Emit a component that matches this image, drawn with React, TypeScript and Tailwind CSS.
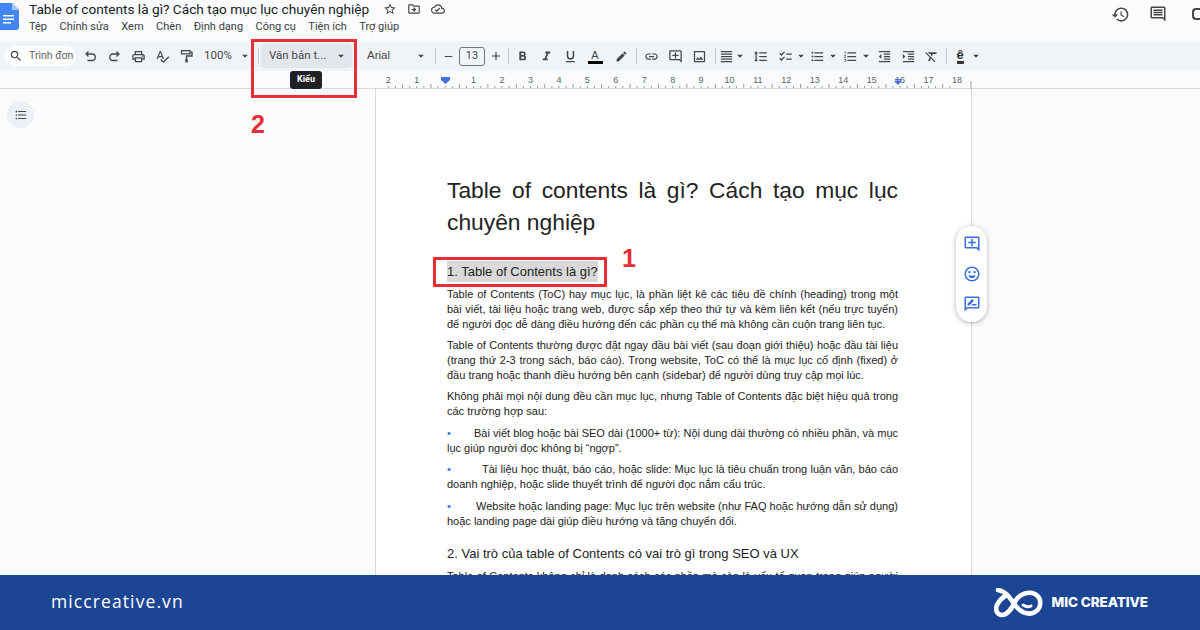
import React from "react";
import {
  MdOutlinePrint, MdSpellcheck, MdFormatBold, MdFormatItalic, MdFormatUnderlined,
  MdEdit, MdLink, MdOutlineAddComment, MdOutlineImage, MdFormatAlignJustify, MdFormatLineSpacing, MdChecklist,
  MdFormatListBulleted, MdFormatListNumbered, MdFormatIndentDecrease, MdFormatIndentIncrease, MdFormatClear, MdHistory,
  MdOutlineComment, MdStarBorder, MdOutlineDriveFileMove, MdOutlineCloudDone, MdOutlineInsertEmoticon, MdOutlineRateReview,
  MdSearch, MdRemove, MdAdd, MdArrowDropDown,
} from "react-icons/md";

type IC = React.ComponentType<{ size?: number; className?: string }>;

const Btn = ({ icon: I, cls = "w-[24px]", size = 15 }: { icon: IC; cls?: string; size?: number }) => (
  <div className={`${cls} h-[24px] shrink-0 flex items-center justify-center text-[#444746]`}>
    <I size={size} />
  </div>
);
const Caret = ({ cls = "w-[8px]" }: { cls?: string }) => (
  <div className={`${cls} h-[24px] shrink-0 flex items-center justify-center text-[#444746] overflow-visible`}>
    <MdArrowDropDown size={14} className="shrink-0" />
  </div>
);

const Undo = ({ size = 15 }: { size?: number }) => (
  <svg width={size} height={size} viewBox="0 0 15 15" fill="none" stroke="currentColor" strokeWidth="1.300">
    <path d="M5.500 2.500L3 5L5.500 7.500M3.300 5H9A2.900 2.900 0 0 1 9 11.500H4.500" />
  </svg>
);
const Redo = ({ size = 15 }: { size?: number }) => (
  <svg width={size} height={size} viewBox="0 0 15 15" fill="none" stroke="currentColor" strokeWidth="1.300">
    <path d="M9.500 2.500L12 5L9.500 7.500M11.700 5H6A2.900 2.900 0 0 0 6 11.500H10.500" />
  </svg>
);
const Roller = ({ size = 15 }: { size?: number }) => (
  <svg width={size} height={size} viewBox="0 0 15 15" fill="none" stroke="currentColor" strokeWidth="1.300">
    <path d="M2.500 1.700H11V4.800H2.500ZM11 3.200H13V7H7.500V9.500" />
    <path d="M6.300 9.500H8.700V13.500H6.300Z" fill="currentColor" stroke="none" />
  </svg>
);

const Ruler = () => {
  const ticks: React.ReactNode[] = [];
  const unit = 28.43;
  const zero = 445.2;
  for (let i = -2; i < 18; i++) {
    for (let j = 0; j < 4; j++) {
      const x = zero + (i + j / 4) * unit - 375;
      if (x < 0) continue;
      ticks.push(<line key={`${i}-${j}`} x1={x} x2={x} y1={j === 2 ? 13 : 15} y2={17} stroke="#80868b" strokeWidth="0.8" />);
    }
  }
  const nums = [-2, -1, 1, 2, 3, 4, 5, 6, 7, 8, 9, 10, 11, 12, 13, 14, 15, 16, 17, 18];
  return (
    <svg width="597" height="18" viewBox="0 0 597 18" className="block">
      {ticks}
      {nums.map((n) => (
        <text key={n} x={zero + n * unit - 375} y={12} fontSize="9" textAnchor="middle" fill="#5f6368" fontFamily="Liberation Sans, sans-serif">
          {Math.abs(n)}
        </text>
      ))}
      <line x1="596" x2="596" y1="10" y2="18" stroke="#9aa0a6" />
      <path d="M66 6h9v3l-4.500 4-4.500-4z" fill="#4a6fe0" />
      <path d="M519 10h8l-4 4z" fill="#4a6fe0" />
      <path d="M520 8h6v1.500h-6z" fill="#4a6fe0" />
    </svg>
  );
};

const P = ({ children, cls = "mb-[6.5px]" }: { children: React.ReactNode; cls?: string }) => (
  <p className={`${cls} text-[11px] leading-[15px] text-justify text-[#222]`}>{children}</p>
);
const Bullet = ({ gap, children }: { gap: string; children: React.ReactNode }) => (
  <p className="mb-[6.5px] text-[11px] leading-[15px] text-justify text-[#222]">
    <span className={`inline-block ${gap} text-[#3b6fd4]`}>•</span>
    {children}
  </p>
);

const Logo = () => (
  <svg width="49" height="30" viewBox="0 0 49 30" fill="none" stroke="#fff" strokeWidth="4.600" strokeLinecap="round">
    <path d="M4 2C12 3 16 10 21 17C26 24 34 28 41 24C48 20 48 10 41 6C34 3 26 6 22 12C18 20 14 27 8 27C3 27 1 22 3 17C5 13 8 10 11 8" />
    <path d="M29 17C32 19 35 19 37 18" strokeWidth="3" />
  </svg>
);

export default function App() {
  return (
    <div className="w-[1200px] h-[630px] flex flex-col overflow-hidden bg-[#f9fbfd] font-['Liberation_Sans',sans-serif] relative">
      {/* header */}
      <header className="h-[41px] shrink-0 flex items-start">
        <svg width="19" height="27" viewBox="0 0 19 27" className="mt-[3px] shrink-0">
          <path d="M0 0H12L19 7V24Q19 27 16 27H0Z" fill="#4285f4" />
          <path d="M12 0L19 7H12Z" fill="#a5c8fb" />
          <path d="M3 12H14V13.500H3ZM3 15.500H14V17H3ZM3 19H11V20.500H3Z" fill="#fff" />
        </svg>
        <div className="ml-[10px] w-[440px] shrink-0">
          <div className="flex items-center h-[18px]">
            <span className="font-['Roboto',sans-serif] text-[13.65px] leading-[18px] text-[#202124] whitespace-nowrap">Table of contents là gì? Cách tạo mục lục chuyên nghiệp</span>
            <MdStarBorder size={14} className="ml-[14px] text-[#444746] shrink-0" />
            <MdOutlineDriveFileMove size={14} className="ml-[10px] text-[#444746] shrink-0" />
            <MdOutlineCloudDone size={14} className="ml-[10px] text-[#444746] shrink-0" />
          </div>
          <nav className="flex gap-[12.5px] mt-[1px] font-['Roboto',sans-serif] text-[11px] leading-[16px] text-[#3c4043] whitespace-nowrap">
            <span>Tệp</span><span>Chỉnh sửa</span><span>Xem</span><span>Chèn</span><span>Định dạng</span><span>Công cụ</span><span>Tiện ích</span><span>Trợ giúp</span>
          </nav>
        </div>
        <div className="ml-auto flex items-center h-[28px] text-[#444746] overflow-hidden">
          <MdHistory size={19} />
          <MdOutlineComment size={18} className="ml-[19px]" />
          <div className="ml-[25px] w-[8px] h-[12px] border-2 border-r-0 border-[#444746] rounded-l-[4px]" />
        </div>
      </header>

      {/* toolbar */}
      <div className="h-[30px] shrink-0 bg-[#f0f4f9] flex items-center pl-[5px] font-['Roboto',sans-serif] text-[11.5px] text-[#444746] whitespace-nowrap">
        <div className="w-[71px] h-[20px] shrink-0 rounded-full bg-white flex items-center pl-[4px] overflow-hidden">
          <MdSearch size={14} className="shrink-0" />
          <span className="ml-[6px] text-[10.5px] text-[#5f6368]">Trình đơn</span>
        </div>
        <div className="ml-[2px] flex">
          <Btn icon={Undo} /><Btn icon={Redo} /><Btn icon={MdOutlinePrint} /><Btn icon={MdSpellcheck} /><Btn icon={Roller} />
        </div>
        <span className="ml-[6px] w-[34px] shrink-0">100%</span>
        <Caret cls="w-[14px]" />
        <div className="ml-[6px] w-px h-[16px] bg-[#c7c7c7] shrink-0" />
        <div className="ml-[2px] w-[91px] h-[24px] shrink-0 rounded bg-[#e3e7ed] flex items-center justify-between pl-[8px] pr-[4px]">
          <span>Văn bản t...</span>
          <MdArrowDropDown size={14} />
        </div>
        <span className="ml-[15px] w-[47px] shrink-0 font-['Liberation_Sans',sans-serif]">Arial</span>
        <Caret cls="w-[14px]" />
        <div className="ml-[7px] w-px h-[16px] bg-[#c7c7c7] shrink-0" />
        <Btn icon={MdRemove} size={13} />
        <div className="-ml-px w-[26px] h-[19px] shrink-0 rounded-[3px] border border-[#747775] flex items-center justify-center text-[11px]">13</div>
        <Btn icon={MdAdd} cls="w-[22px]" size={14} />
        <div className="ml-px w-px h-[16px] bg-[#c7c7c7] shrink-0" />
        <div className="ml-px flex">
          <Btn icon={MdFormatBold} /><Btn icon={MdFormatItalic} /><Btn icon={MdFormatUnderlined} />
        </div>
        <div className="ml-px w-[24px] h-[24px] shrink-0 flex flex-col items-center justify-center">
          <span className="text-[11px] leading-[12px] font-['Liberation_Sans',sans-serif]">A</span>
          <div className="w-[15px] h-[3px] bg-black" />
        </div>
        <Btn icon={MdEdit} cls="ml-[2px] w-[24px]" size={13} />
        <div className="ml-[3px] w-px h-[16px] bg-[#c7c7c7] shrink-0" />
        <Btn icon={MdLink} cls="ml-[2px] w-[24px]" />
        <Btn icon={MdOutlineAddComment} />
        <Btn icon={MdOutlineImage} />
        <div className="ml-[4px] w-px h-[16px] bg-[#c7c7c7] shrink-0" />
        <Btn icon={MdFormatAlignJustify} cls="w-[20px]" />
        <Caret />
        <Btn icon={MdFormatLineSpacing} cls="ml-[4px] w-[24px]" />
        <Btn icon={MdChecklist} cls="ml-px w-[24px]" />
        <Caret />
        <Btn icon={MdFormatListBulleted} />
        <Caret />
        <Btn icon={MdFormatListNumbered} cls="ml-px w-[24px]" />
        <Caret />
        <Btn icon={MdFormatIndentDecrease} cls="ml-[2px] w-[24px]" />
        <Btn icon={MdFormatIndentIncrease} />
        <Btn icon={MdFormatClear} cls="-ml-px w-[24px]" />
        <div className="ml-[3px] w-px h-[16px] bg-[#c7c7c7] shrink-0" />
        <div className="ml-px w-[24px] h-[24px] shrink-0 flex flex-col items-center justify-center text-[#333]">
          <span className="text-[13px] leading-[11px] font-bold font-['Liberation_Sans',sans-serif]">ê</span>
          <div className="w-[7px] h-[3px] mt-px bg-[#333] rounded-b-[1px]" />
        </div>
        <Caret />
      </div>

      {/* ruler */}
      <div className="h-[18px] shrink-0 border-b border-[#d8d9dc] pl-[375px]">
        <Ruler />
      </div>

      {/* workspace */}
      <main className="flex-1 min-h-0 flex overflow-hidden">
        <aside className="w-[375px] shrink-0 pt-[12px] pl-[7px]">
          <div className="w-[27px] h-[27px] rounded-full bg-[#edf1f7] flex items-center justify-center text-[#444746]">
            <MdFormatListBulleted size={14} />
          </div>
        </aside>
        <div className="w-[597px] shrink-0 bg-white border-x border-[#d5d7da] pl-[71px] pr-[73px] pt-[85px] text-[#222]">
          <h1 className="text-[22.8px] leading-[32px] text-justify mb-[24px]">Table of contents là gì? Cách tạo mục lục chuyên nghiệp</h1>
          <h2 className="text-[13px] leading-[20px] mb-[5px]"><span className="bg-[#d9d9d9] py-[3px]">1. Table of Contents là gì?</span></h2>
          <P cls="mb-[5.5px]">Table of Contents (ToC) hay mục lục, là phần liệt kê các tiêu đề chính (heading) trong một bài viết, tài liệu hoặc trang web, được sắp xếp theo thứ tự và kèm liên kết (nếu trực tuyến) để người đọc dễ dàng điều hướng đến các phần cụ thể mà không cần cuộn trang liên tục.</P>
          <P>Table of Contents thường được đặt ngay đầu bài viết (sau đoạn giới thiệu) hoặc đầu tài liệu (trang thứ 2-3 trong sách, báo cáo). Trong website, ToC có thể là mục lục cố định (fixed) ở đầu trang hoặc thanh điều hướng bên cạnh (sidebar) để người dùng truy cập mọi lúc.</P>
          <P>Không phải mọi nội dung đều cần mục lục, nhưng Table of Contents đặc biệt hiệu quả trong các trường hợp sau:</P>
          <Bullet gap="w-[27px]">Bài viết blog hoặc bài SEO dài (1000+ từ): Nội dung dài thường có nhiều phần, và mục lục giúp người đọc không bị “ngợp”.</Bullet>
          <Bullet gap="w-[35px]">Tài liệu học thuật, báo cáo, hoặc slide: Mục lục là tiêu chuẩn trong luận văn, báo cáo doanh nghiệp, hoặc slide thuyết trình để người đọc nắm cấu trúc.</Bullet>
          <Bullet gap="w-[29px]">Website hoặc landing page: Mục lục trên website (như FAQ hoặc hướng dẫn sử dụng) hoặc landing page dài giúp điều hướng và tăng chuyển đổi.</Bullet>
          <h2 className="text-[13px] leading-[20px] mt-[15px] mb-[5px]">2. Vai trò của table of Contents có vai trò gì trong SEO và UX</h2>
          <P>Table of Contents không chỉ là danh sách các phần mà còn là yếu tố quan trọng giúp người đọc và công cụ tìm kiếm hiểu nội dung.</P>
        </div>
      </main>

      {/* footer */}
      <footer className="h-[55px] shrink-0 bg-[#1c4594] flex items-center justify-between pl-[51px] pr-[52px] text-white">
        <span className="font-['Open_Sans',sans-serif] text-[17.5px] tracking-[1.1px] -mt-[2px]">miccreative.vn</span>
        <div className="flex items-center">
          <Logo />
          <span className="ml-[9px] font-['Inter',sans-serif] font-extrabold text-[13.5px] tracking-[-0.1px]">MIC CREATIVE</span>
        </div>
      </footer>

      {/* overlays */}
      <div className="absolute left-[251px] top-[39px] w-[106px] h-[59px] border-[3px] border-[#e63035]" />
      <div className="absolute left-[290px] top-[71px] w-[32px] h-[18px] rounded-[3px] bg-[#202124] text-white text-[9px] font-bold flex items-center justify-center font-['Roboto',sans-serif]">Kiểu</div>
      <span className="absolute left-[251px] top-[110px] text-[#e63035] font-bold text-[25px] leading-[28px]">2</span>
      <div className="absolute left-[433px] top-[257px] w-[174px] h-[30px] border-[3px] border-[#e63035]" />
      <span className="absolute left-[622px] top-[244px] text-[#e63035] font-bold text-[25px] leading-[28px]">1</span>
      <div className="absolute left-[956px] top-[226px] w-[31px] h-[96px] rounded-full bg-white shadow-[0_1px_5px_rgba(0,0,0,0.3)] flex flex-col items-center pt-[9px] gap-[12px] text-[#3a6fd8]">
        <MdOutlineAddComment size={18} />
        <MdOutlineInsertEmoticon size={18} />
        <MdOutlineRateReview size={18} />
      </div>
    </div>
  );
}
